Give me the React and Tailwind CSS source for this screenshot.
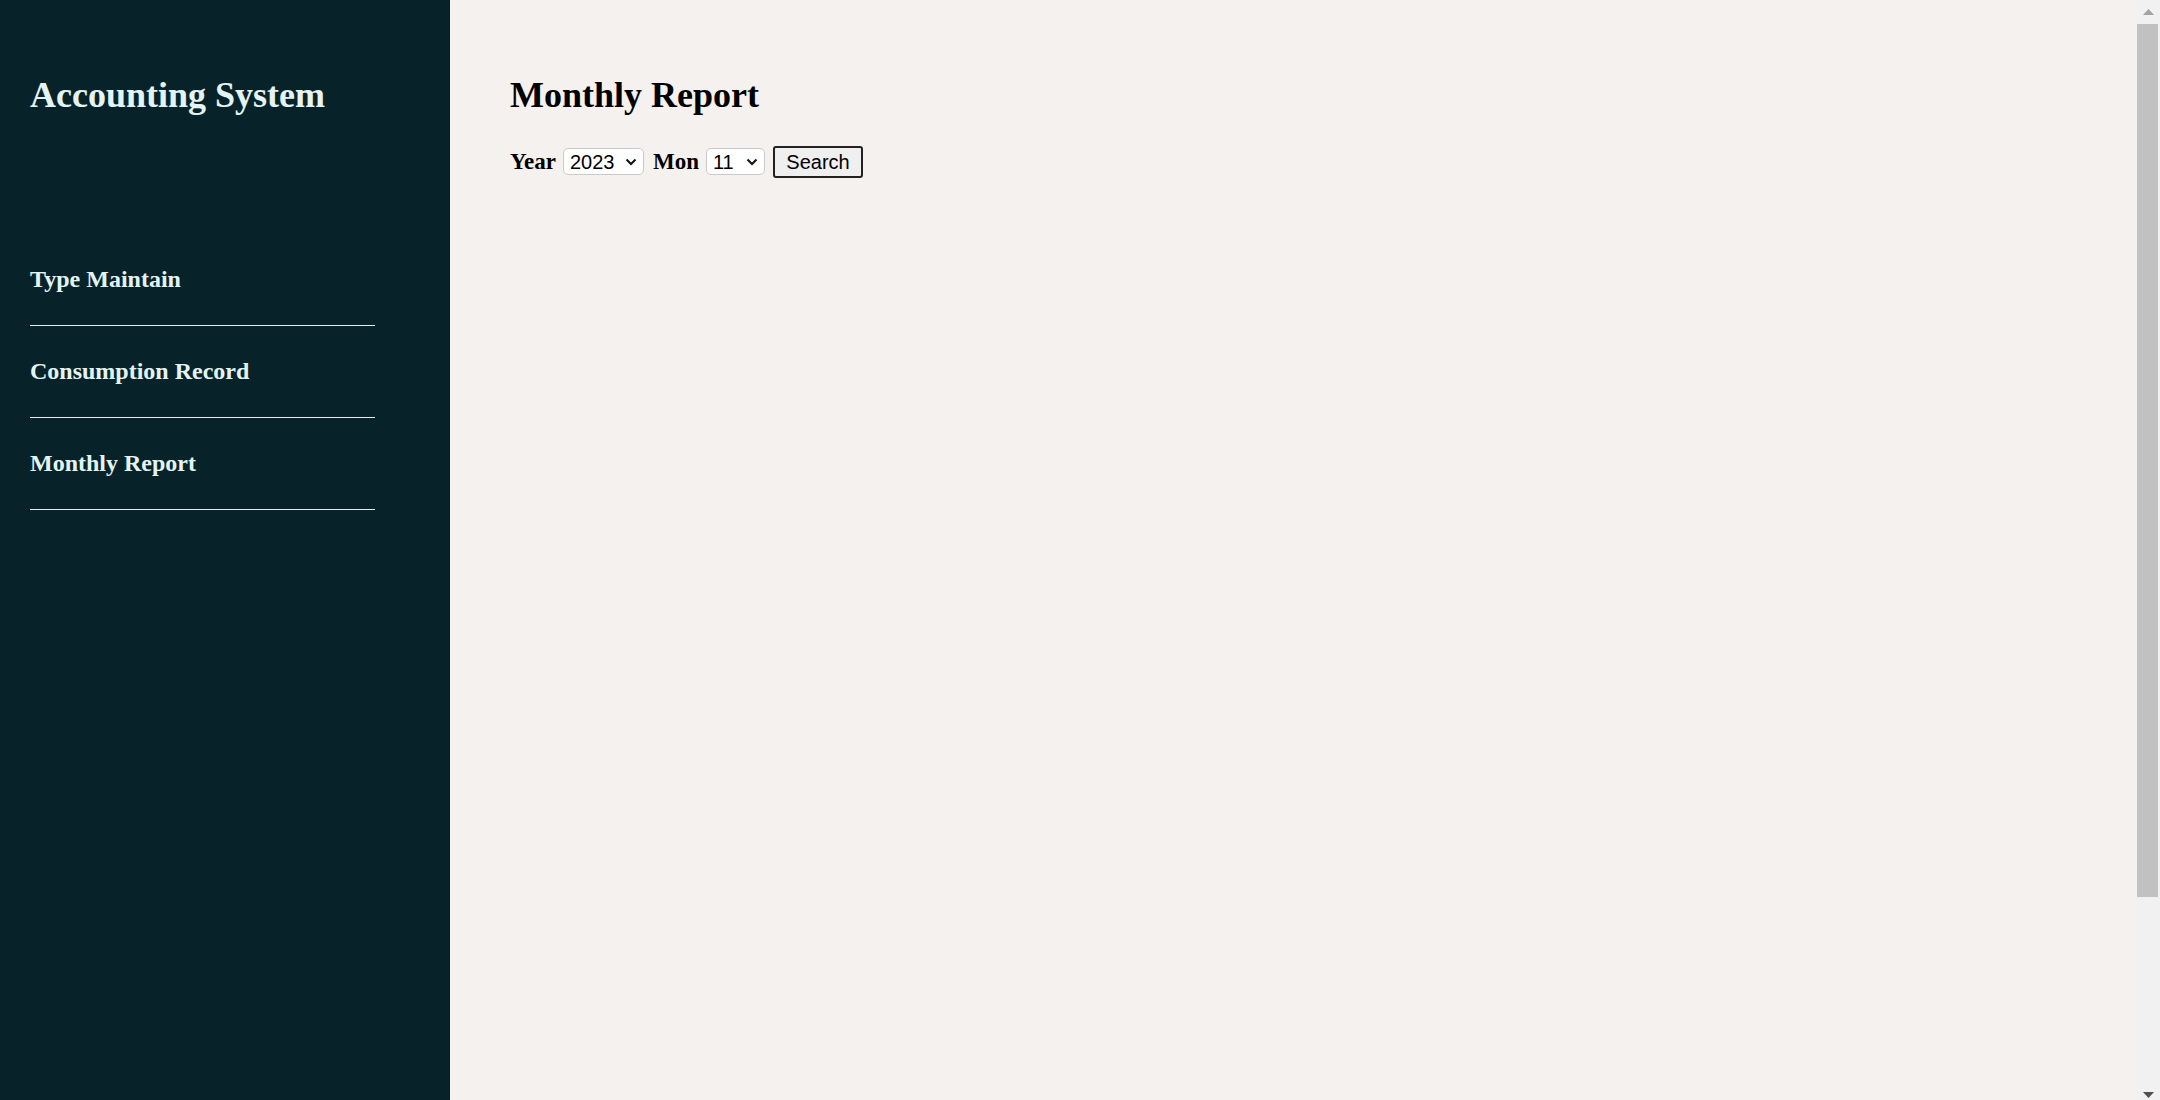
import React, { useState } from 'react'

const navItems = ['Type Maintain', 'Consumption Record', 'Monthly Report']

const Chevron = () => (
  <svg
    className="pointer-events-none absolute right-[7px] top-1/2 -translate-y-1/2"
    width="12"
    height="8"
    viewBox="0 0 12 8"
    fill="none"
  >
    <path d="M1.5 1.5 L6 6 L10.5 1.5" stroke="#111" strokeWidth="2" />
  </svg>
)

const Select = ({ value, onChange, options, width }) => (
  <div className={`relative ${width}`}>
    <select
      value={value}
      onChange={(e) => onChange(e.target.value)}
      className="h-[27px] w-full appearance-none rounded-[5px] border border-[#c9c9c9] bg-white pl-[6px] pr-[22px] text-[20px] leading-none text-black outline-none"
      style={{ fontFamily: '"Liberation Sans", Arial, sans-serif' }}
    >
      {options.map((o) => (
        <option key={o} value={o}>
          {o}
        </option>
      ))}
    </select>
    <Chevron />
  </div>
)

// page scrollbar as it shows in the screenshot
const ScrollBar = () => (
  <div className="flex w-[24px] shrink-0 flex-col bg-[#f1f1f1]">
    <div className="flex h-[24px] items-start justify-center pt-[9px]">
      <svg width="11" height="6" viewBox="0 0 11 6">
        <path d="M5.5 0 L11 6 L0 6 Z" fill="#a3a3a3" />
      </svg>
    </div>
    <div className="ml-[1px] mr-[2px] h-[873px] bg-[#c1c1c1]" />
    <div className="flex-1" />
    <div className="flex h-[24px] items-end justify-center pb-[2px]">
      <svg width="11" height="6" viewBox="0 0 11 6">
        <path d="M0 0 L11 0 L5.5 6 Z" fill="#505050" />
      </svg>
    </div>
  </div>
)

export default function App() {
  const [year, setYear] = useState('2023')
  const [month, setMonth] = useState('11')
  const years = ['2021', '2022', '2023', '2024']
  const months = ['1', '2', '3', '4', '5', '6', '7', '8', '9', '10', '11', '12']

  return (
    <div
      className="flex h-screen w-full overflow-hidden"
      style={{ fontFamily: '"Liberation Serif", "Times New Roman", serif' }}
    >
      {/* Sidebar */}
      <aside className="w-[450px] shrink-0 bg-[#072329] pl-[30px] pt-[77px] text-[#e4f4f4]">
        <h2 className="text-[36px] font-bold leading-[36px]">Accounting System</h2>
        <nav className="mt-[121px] w-[345px]">
          {navItems.map((item) => (
            <a
              key={item}
              href="#"
              className="block border-b border-[#e8eeee] pb-[34px] pt-[33px] text-[24px] font-bold leading-[24px]"
            >
              {item}
            </a>
          ))}
        </nav>
      </aside>

      {/* Main */}
      <main className="flex-1 bg-[#f5f1ee] pl-[60px] pt-[77px] text-black">
        <h1 className="text-[36px] font-bold leading-[36px]">Monthly Report</h1>
        <div className="mt-[33px] flex h-[32px] items-center">
          <span className="text-[23px] font-bold leading-[32px]">Year</span>
          <div className="ml-[7px]">
            <Select value={year} onChange={setYear} options={years} width="w-[81px]" />
          </div>
          <span className="ml-[9px] text-[23px] font-bold leading-[32px]">Mon</span>
          <div className="ml-[7px]">
            <Select value={month} onChange={setMonth} options={months} width="w-[59px]" />
          </div>
          <button
            type="button"
            className="ml-[8px] h-[32px] w-[90px] rounded-[3px] border-2 border-[#222] bg-[#efefef] text-[20px] leading-none text-black"
            style={{ fontFamily: '"Liberation Sans", Arial, sans-serif' }}
          >
            Search
          </button>
        </div>
      </main>

      <ScrollBar />
    </div>
  )
}
